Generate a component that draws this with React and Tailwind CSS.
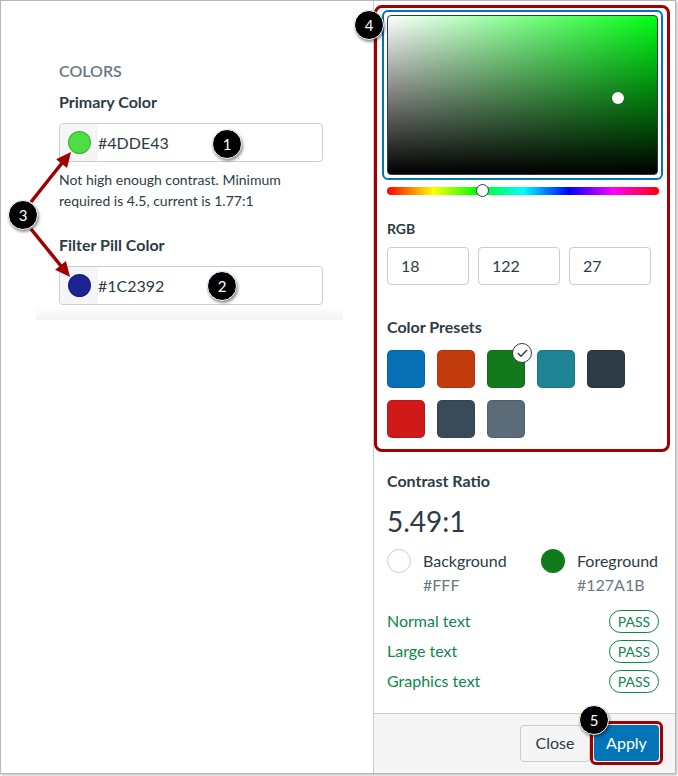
import React from 'react';
import { Check } from 'lucide-react';

const TEXT = 'text-[#2d3b45]';

const Badge = ({ n, x, y }) => (
    <div
        className="absolute w-[30px] h-[30px] rounded-full bg-black text-white border-[1.5px] border-white shadow-[1px_2px_3px_rgba(0,0,0,0.45)] flex items-center justify-center text-[15px]"
        style={{ left: x - 15, top: y - 15 }}
    >
        {n}
    </div>
);

const ColorInput = ({ color, value }) => (
    <div className="flex h-[39px] w-[264px] border border-[#c7cdd1] rounded-[4px] overflow-hidden bg-white">
        <div className="w-[38px] bg-[#f5f5f5] flex items-center justify-center">
            <div className="w-[23px] h-[23px] rounded-full border border-black/20" style={{ background: color }} />
        </div>
        <div className={`flex items-center text-[16px] ${TEXT}`}>{value}</div>
    </div>
);

const presets = [
    ['#0770b5', '#c23c0d', '#127a1b', '#1e8393', '#2d3b45'],
    ['#d01a19', '#394b58', '#5b6b78'],
];

const Pass = () => (
    <span className="h-[23px] w-[50px] rounded-full border border-[#0b874b] text-[#0b874b] text-[14px] flex items-center justify-center">
        PASS
    </span>
);

export default function App() {
    return (
        <div className="w-[678px] h-[776px] bg-white" style={{ fontFamily: 'Lato, "Noto Sans", sans-serif' }}>
            <div className="relative w-[676px] h-[774px] border border-[#b8b8b8] shadow-[1px_1px_3px_rgba(0,0,0,0.3)] flex bg-white">
                {/* Left: colour fields */}
                <div className="w-[372px] pl-[35px] pt-[58px]">
                    <div className="w-[307px]">
                        <div className="pl-[23px]">
                            <div className="text-[16px] leading-[24px] font-semibold text-[#6b7780]">COLORS</div>
                            <div className={`mt-[7px] text-[16px] leading-[24px] font-bold ${TEXT}`}>Primary Color</div>
                            <div className="mt-[9px]">
                                <ColorInput color="#4dde43" value="#4DDE43" />
                            </div>
                            <div className={`mt-[7px] text-[14px] leading-[21px] ${TEXT}`}>
                                Not high enough contrast. Minimum<br />required is 4.5, current is 1.77:1
                            </div>
                            <div className={`mt-[22px] text-[16px] leading-[24px] font-bold ${TEXT}`}>Filter Pill Color</div>
                            <div className="mt-[9px]">
                                <ColorInput color="#1c2392" value="#1C2392" />
                            </div>
                        </div>
                        <div className="h-[15px] bg-gradient-to-b from-white to-[#f4f4f4]" />
                    </div>
                </div>

                {/* Right: picker */}
                <div className="w-[302px] border-l border-[#c7cdd1] flex flex-col">
                    <div className="mt-[4px] mr-[5px] border-[3px] border-[#a00000] rounded-[8px] pl-[5px] pr-[4px] pt-[2px] pb-[11px]">
                        <div className="border-2 border-[#0374b5] rounded-[6px] p-[3px]">
                            <div
                                className="relative h-[160px] rounded-[4px] border border-[#2d3b45]"
                                style={{
                                    background:
                                        'linear-gradient(to top, #000, rgba(0,0,0,0)), linear-gradient(to right, #fff, hsl(125, 100%, 50%))',
                                }}
                            >
                                <div className="absolute left-[224px] top-[76px] w-[12px] h-[12px] rounded-full bg-white shadow-[0_0_1px_rgba(0,0,0,0.5)]" />
                            </div>
                        </div>
                        <div
                            className="relative ml-[5px] mt-[7px] w-[272px] h-[8px] rounded-full"
                            style={{
                                background:
                                    'linear-gradient(to right, #f00, #ff0 17%, #0f0 33%, #0ff 50%, #00f 67%, #f0f 83%, #f00)',
                            }}
                        >
                            <div className="absolute left-[89px] top-[-3px] w-[13px] h-[13px] rounded-full bg-white border border-[#2d3b45]" />
                        </div>

                        <div className="pl-[5px]">
                            <div className={`mt-[24px] text-[14px] leading-[20px] font-bold ${TEXT}`}>RGB</div>
                            <div className="mt-[8px] flex gap-[9px]">
                                {['18', '122', '27'].map((v) => (
                                    <div
                                        key={v}
                                        className={`w-[82px] h-[38px] border border-[#c7cdd1] rounded-[4px] flex items-center pl-[13px] text-[16px] ${TEXT}`}
                                    >
                                        {v}
                                    </div>
                                ))}
                            </div>
                            <div className={`mt-[30px] text-[16px] leading-[24px] font-bold ${TEXT}`}>Color Presets</div>
                            <div className="mt-[11px] flex flex-col gap-[12px]">
                                {presets.map((row, i) => (
                                    <div key={i} className="flex gap-[12px]">
                                        {row.map((c) => (
                                            <div
                                                key={c}
                                                className="relative w-[38px] h-[38px] rounded-[5px] border border-black/10"
                                                style={{ background: c }}
                                            >
                                                {c === '#127a1b' && (
                                                    <div className="absolute left-[24px] top-[-8px] w-[20px] h-[20px] rounded-full bg-white border border-[#2d3b45] flex items-center justify-center">
                                                        <Check size={13} strokeWidth={2.5} color="#2d3b45" />
                                                    </div>
                                                )}
                                            </div>
                                        ))}
                                    </div>
                                ))}
                            </div>
                        </div>
                    </div>

                    <div className="pl-[13px] pr-[16px]">
                        <div className={`mt-[17px] text-[16px] leading-[24px] font-bold ${TEXT}`}>Contrast Ratio</div>
                        <div className={`mt-[10px] text-[28px] leading-[36px] ${TEXT}`}>5.49:1</div>
                        <div className="mt-[10px] flex">
                            <div className="w-[154px] flex gap-[12px]">
                                <div className="w-[24px] h-[24px] rounded-full border border-[#c7cdd1] bg-white" />
                                <div className="text-[16px] leading-[24px]">
                                    <div className={TEXT}>Background</div>
                                    <div className="text-[#6b7780]">#FFF</div>
                                </div>
                            </div>
                            <div className="flex gap-[12px]">
                                <div className="w-[24px] h-[24px] rounded-full bg-[#127a1b]" />
                                <div className="text-[16px] leading-[24px]">
                                    <div className={TEXT}>Foreground</div>
                                    <div className="text-[#6b7780]">#127A1B</div>
                                </div>
                            </div>
                        </div>
                        <div className="mt-[12px] flex flex-col gap-[6px]">
                            {['Normal text', 'Large text', 'Graphics text'].map((t) => (
                                <div key={t} className="flex items-center justify-between h-[24px]">
                                    <span className="text-[16px] text-[#0b874b]">{t}</span>
                                    <Pass />
                                </div>
                            ))}
                        </div>
                    </div>

                    <div className="flex-1" />
                    <div className="h-[60px] border-t border-[#c7cdd1] bg-[#f5f5f5] flex items-center justify-end pr-[12px] pb-[1px]">
                        <button className={`w-[70px] h-[37px] border border-[#c7cdd1] rounded-[4px] bg-[#f5f5f5] text-[16px] ${TEXT}`}>
                            Close
                        </button>
                        <div className="border-[3px] border-[#a00000] rounded-[6px] p-[1px]">
                            <button className="w-[65px] h-[36px] rounded-[4px] bg-[#0374b5] text-white text-[16px]">
                                Apply
                            </button>
                        </div>
                    </div>
                </div>

                {/* annotations */}
                <svg className="absolute left-0 top-0 pointer-events-none" width="372" height="330">
                    <line x1="30" y1="201" x2="61" y2="162" stroke="#a00000" strokeWidth="3.5" />
                    <polygon points="70,151 66.1,167.1 55.1,158.3" fill="#a00000" />
                    <line x1="30" y1="228" x2="60" y2="265" stroke="#a00000" strokeWidth="3.5" />
                    <polygon points="69,276 64.9,259.9 54.1,268.7" fill="#a00000" />
                </svg>
                <Badge n="1" x={226} y={143} />
                <Badge n="2" x={221} y={285} />
                <Badge n="3" x={22} y={214} />
                <Badge n="4" x={368} y={24} />
                <Badge n="5" x={593} y={719} />
            </div>
        </div>
    );
}
